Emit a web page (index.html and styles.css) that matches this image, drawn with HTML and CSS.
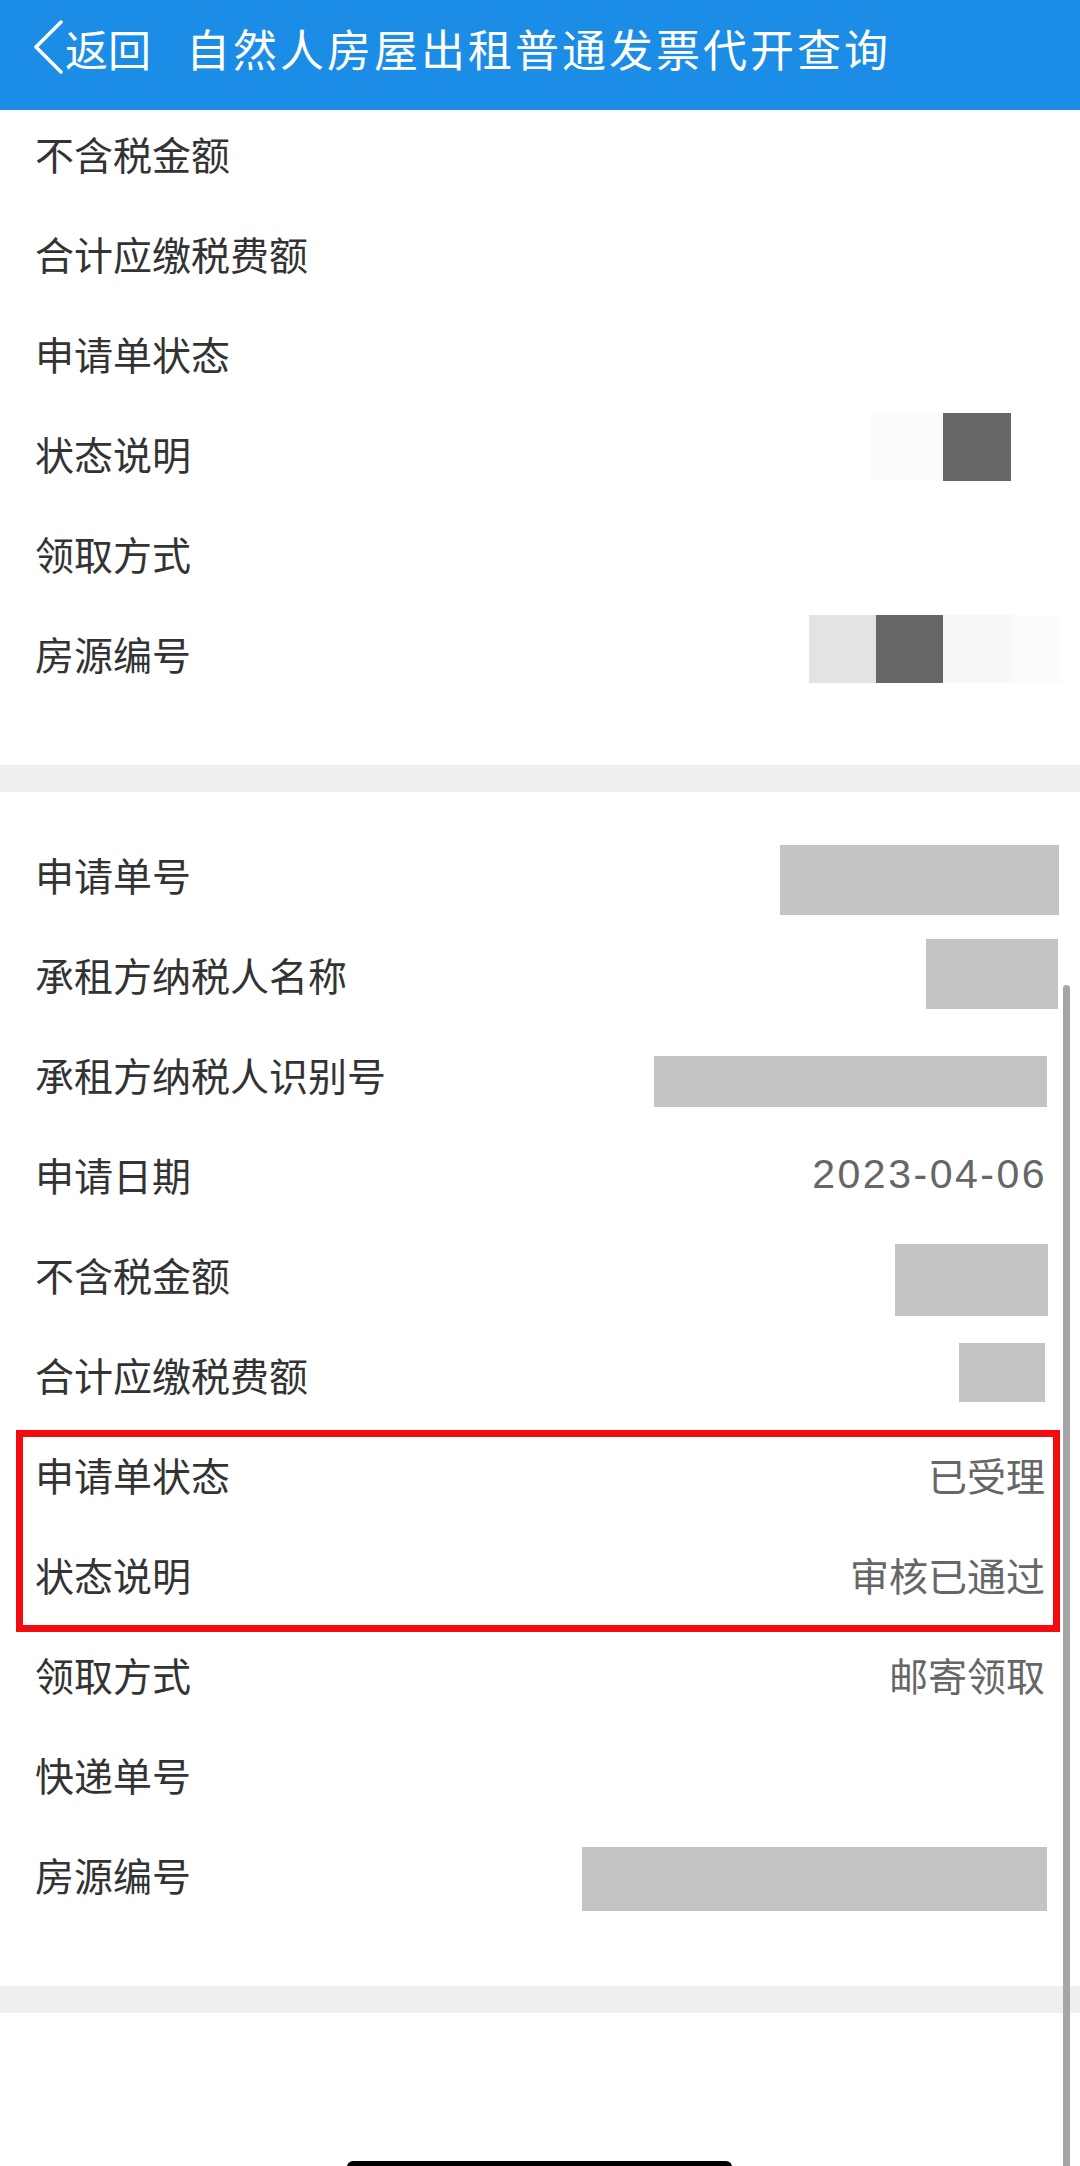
FILE: index.html
```html
<!DOCTYPE html>
<html lang="zh-CN">
<head>
  <meta charset="UTF-8">
  <meta name="viewport" content="width=device-width, initial-scale=1.0">
  <title>自然人房屋出租普通发票代开查询</title>
  <link rel="stylesheet" href="styles.css">
</head>
<body>
  <header class="topbar">
    <a class="back" href="#">
      <svg class="back-icon" width="30" height="56" viewBox="0 0 30 56">
        <polyline points="28,2 3,27 28,52" fill="none" stroke="#fff" stroke-width="3.5" stroke-linecap="round" stroke-linejoin="round"/>
      </svg>
      <span>返回</span>
    </a>
    <h1 class="title">自然人房屋出租普通发票代开查询</h1>
  </header>

  <main class="page">
    <!-- previous record, scrolled partly under the header -->
    <section class="detail detail-first">
      <div class="row"><span class="label">不含税金额</span></div>
      <div class="row"><span class="label">合计应缴税费额</span></div>
      <div class="row"><span class="label">申请单状态</span></div>
      <div class="row">
        <span class="label">状态说明</span>
        <span class="mask-group mask-status">
          <i class="piece piece-faint w72"></i><i class="piece piece-dark w68"></i>
        </span>
      </div>
      <div class="row"><span class="label">领取方式</span></div>
      <div class="row">
        <span class="label">房源编号</span>
        <span class="mask-group mask-house-old">
          <i class="piece piece-light w67"></i><i class="piece piece-dark w67"></i><i class="piece piece-paler w69"></i><i class="piece piece-faint w49"></i>
        </span>
      </div>
    </section>

    <div class="divider"></div>

    <section class="detail">
      <div class="row">
        <span class="label">申请单号</span>
        <span class="mask mask-order"></span>
      </div>
      <div class="row">
        <span class="label">承租方纳税人名称</span>
        <span class="mask mask-name"></span>
      </div>
      <div class="row">
        <span class="label">承租方纳税人识别号</span>
        <span class="mask mask-taxid"></span>
      </div>
      <div class="row">
        <span class="label">申请日期</span>
        <span class="value value-date">2023-04-06</span>
      </div>
      <div class="row">
        <span class="label">不含税金额</span>
        <span class="mask mask-amount"></span>
      </div>
      <div class="row">
        <span class="label">合计应缴税费额</span>
        <span class="mask mask-tax"></span>
      </div>
      <div class="row">
        <span class="label">申请单状态</span>
        <span class="value">已受理</span>
      </div>
      <div class="row">
        <span class="label">状态说明</span>
        <span class="value">审核已通过</span>
      </div>
      <div class="row">
        <span class="label">领取方式</span>
        <span class="value">邮寄领取</span>
      </div>
      <div class="row">
        <span class="label">快递单号</span>
      </div>
      <div class="row">
        <span class="label">房源编号</span>
        <span class="mask mask-house"></span>
      </div>

      <div class="highlight"></div>
    </section>

    <div class="divider"></div>
  </main>

  <div class="scrollbar"></div>
  <div class="home-bar"></div>
</body>
</html>
```

FILE: styles.css
```css
body {
  margin: 0;
  padding: 0;
  width: 1080px;
  height: 2166px;
  overflow: hidden;
  position: relative;
  background-color: #fff;
  font-family: "Noto Sans CJK SC", "Noto Sans", sans-serif;
  color: #333;
}

/* Top bar */
.topbar {
  position: relative;
  z-index: 2;
  height: 110px;
  box-sizing: border-box;
  padding: 0 0 14px 33px;
  display: flex;
  align-items: center;
  background-color: #1b8de6;
  color: #fff;
}

.back {
  display: flex;
  align-items: center;
  color: #fff;
  text-decoration: none;
  font-size: 43px;
  line-height: 1;
}

.back-icon {
  display: block;
  margin-right: 2px;
}

.title {
  margin: 0 0 0 35px;
  font-size: 44px;
  font-weight: normal;
  letter-spacing: 3px;
  line-height: 1;
}

/* Detail list */
.detail {
  position: relative;
  padding: 32px 35px 62px;
}

.detail-first {
  margin-top: -39px;
}

.row {
  height: 100px;
  display: flex;
  justify-content: space-between;
  align-items: center;
}

.label {
  font-size: 39px;
  line-height: 1;
  color: #333;
}

.value {
  font-size: 39px;
  line-height: 1;
  color: #666;
}

.value-date {
  font-family: "Liberation Sans", Arial, sans-serif;
  font-size: 41px;
  letter-spacing: 2.5px;
  margin-right: -2px;
}

.divider {
  height: 27px;
  background-color: #efefef;
}

/* Redacted values */
.mask {
  display: block;
  background-color: #c4c4c4;
}

.mask-order {
  width: 279px;
  height: 70px;
  margin: 12px -14px 0 0;
}

.mask-name {
  width: 132px;
  height: 70px;
  margin-right: -13px;
}

.mask-taxid {
  width: 393px;
  height: 51px;
  margin: 14px -2px 0 0;
}

.mask-amount {
  width: 153px;
  height: 72px;
  margin: 12px -3px 0 0;
}

.mask-tax {
  width: 86px;
  height: 59px;
  margin-bottom: 4px;
}

.mask-house {
  width: 465px;
  height: 64px;
  margin: 10px -2px 0 0;
}

.mask-group {
  display: flex;
  height: 68px;
}

.mask-status {
  margin: 0 34px 13px 0;
}

.mask-house-old {
  margin: 0 -16px 8px 0;
}

.piece {
  display: block;
  height: 100%;
}

.piece-dark { background-color: #666; }
.piece-light { background-color: #e3e3e3; }
.piece-paler { background-color: #f7f7f7; }
.piece-faint { background-color: #fbfbfb; }

.w49 { width: 49px; }
.w67 { width: 67px; }
.w68 { width: 68px; }
.w69 { width: 69px; }
.w72 { width: 72px; }

/* red annotation drawn over the two status rows */
.highlight {
  position: absolute;
  left: 16px;
  top: 638px;
  width: 1044px;
  height: 202px;
  box-sizing: border-box;
  border: 7px solid #f20c10;
}

.scrollbar {
  position: absolute;
  top: 985px;
  bottom: 0;
  right: 10px;
  width: 7px;
  border-radius: 4px 4px 0 0;
  background-color: #a6a6a6;
}

.home-bar {
  position: absolute;
  left: 347px;
  top: 2161px;
  width: 385px;
  height: 12px;
  border-radius: 6px;
  background-color: #000;
}
```
